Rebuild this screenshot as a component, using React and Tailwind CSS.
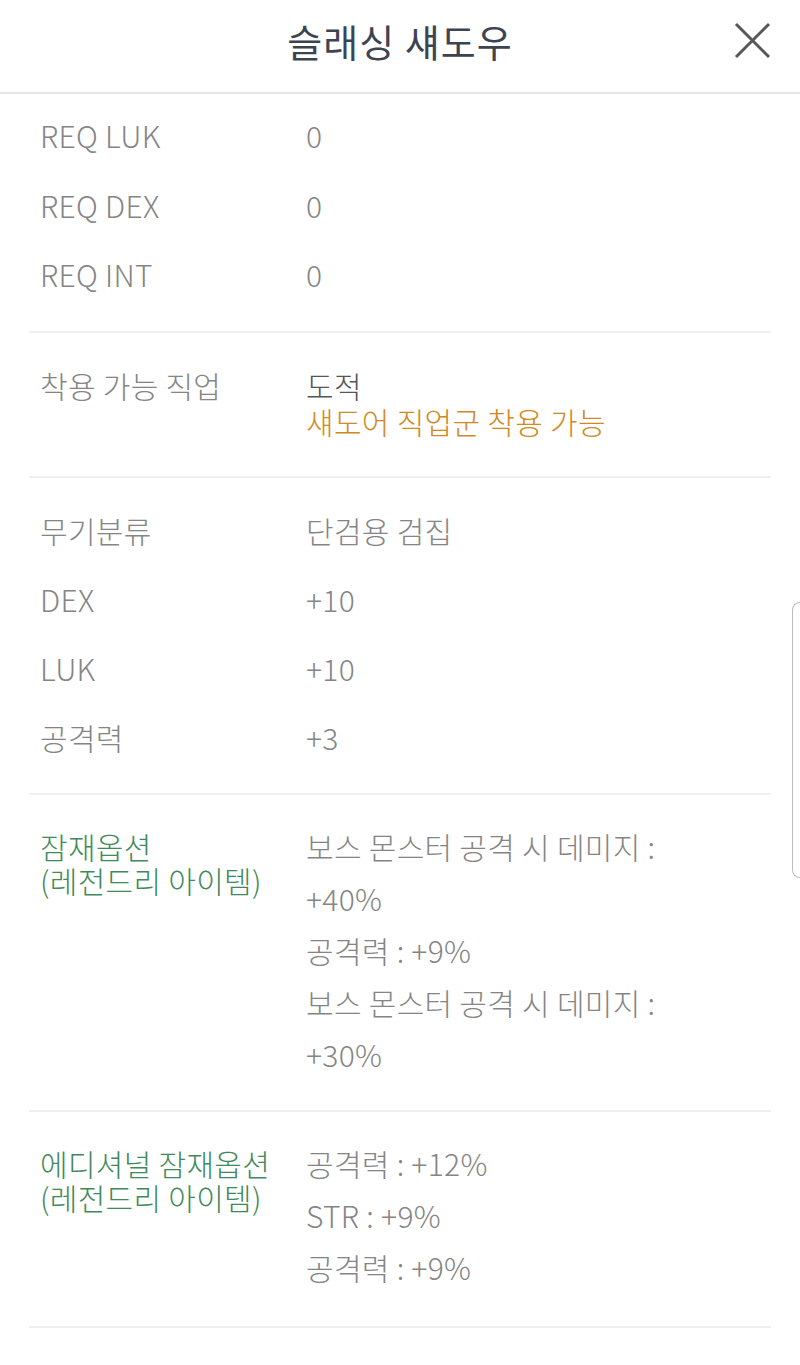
import React from "react";

const font = { fontFamily: '"Noto Sans CJK KR", "Noto Sans", sans-serif' };

const Row = ({ label, children }) => (
  <div className="flex leading-[36px]">
    <div className="w-[266px] shrink-0 text-[#858585]">{label}</div>
    <div className="text-[#858585]">{children}</div>
  </div>
);

const Section = ({ children, className = "" }) => (
  <div className={`mx-[29px] border-b-2 border-[#f0f0f0] px-[11px] ${className}`}>
    {children}
  </div>
);

const PotentialSection = ({ title, values, className }) => (
  <Section className={className}>
    <div className="flex">
      <div className="w-[266px] shrink-0 pt-[9px] leading-[34px] text-[#3f8a5a]">
        {title}
        <br />
        (레전드리 아이템)
      </div>
      <div className="leading-[52px] text-[#858585]">
        {values.map((v, i) => (
          <div key={i}>{v}</div>
        ))}
      </div>
    </div>
  </Section>
);

export default function App() {
  return (
    <div className="min-h-[1365px] bg-white text-[30px] font-light tracking-[0.3px]" style={font}>
      {/* HEADER */}
      <div className="relative flex h-[94px] items-center justify-center border-b-2 border-[#e6e6e6]">
        <h1 className="pb-[12px] text-[38px] font-normal tracking-[1px] text-[#3d4451]">슬래싱 섀도우</h1>
        <svg
          className="absolute right-[29px] top-[22px]"
          width="37"
          height="37"
          viewBox="0 0 37 37"
        >
          <path d="M2 2 L35 35 M35 2 L2 35" stroke="#575757" strokeWidth="3" />
        </svg>
      </div>

      {/* REQ */}
      <Section className="flex flex-col gap-[33.5px] pt-[23px] pb-[39px]">
        <Row label="REQ LUK">0</Row>
        <Row label="REQ DEX">0</Row>
        <Row label="REQ INT">0</Row>
      </Section>

      {/* JOB */}
      <Section className="pt-[34px] pb-[37px]">
        <div className="flex leading-[36px]">
          <div className="w-[266px] shrink-0 text-[#858585]">착용 가능 직업</div>
          <div>
            <div className="text-[#555555]">도적</div>
            <div className="text-[#d18a1f]">섀도어 직업군 착용 가능</div>
          </div>
        </div>
      </Section>

      {/* STATS */}
      <Section className="flex flex-col gap-[33px] pt-[34px] pb-[38px]">
        <Row label="무기분류">단검용 검집</Row>
        <Row label="DEX">+10</Row>
        <Row label="LUK">+10</Row>
        <Row label="공격력">+3</Row>
      </Section>

      <PotentialSection
        className="pt-[25px] pb-[30px]"
        title="잠재옵션"
        values={[
          "보스 몬스터 공격 시 데미지 :",
          "+40%",
          "공격력 : +9%",
          "보스 몬스터 공격 시 데미지 :",
          "+30%",
        ]}
      />

      <PotentialSection
        className="pt-[25px] pb-[33px]"
        title="에디셔널 잠재옵션"
        values={["공격력 : +12%", "STR : +9%", "공격력 : +9%"]}
      />

      {/* edge handle */}
      <div className="absolute right-0 top-[602px] h-[276px] w-[8px] rounded-l-[8px] border-y border-l border-[#bdbdbd] bg-white" />
    </div>
  );
}
